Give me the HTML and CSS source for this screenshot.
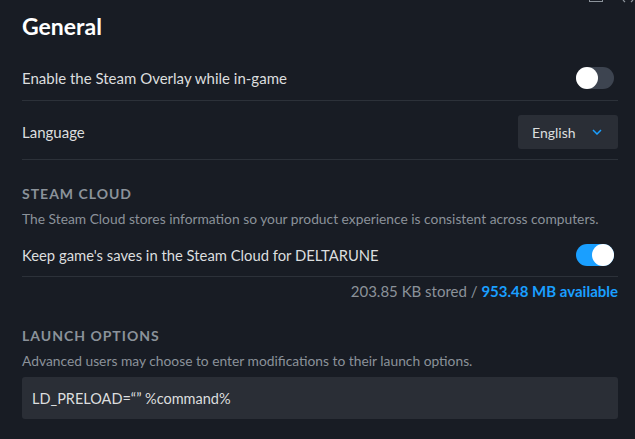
FILE: index.html
```html
<!DOCTYPE html>
<html>
<head>
<meta charset="utf-8">
<link rel="stylesheet" href="styles.css">
</head>
<body>
<div class="winctl">
  <span class="max"></span>
  <span class="close">
    <svg width="12" height="4" viewBox="0 0 12 4"><path d="M1 0 L3 2 M11 0 L9 2" stroke="#8b929a" stroke-width="1.2"/></svg>
  </span>
</div>
<div class="page">
  <h1 class="title">General</h1>
  <div class="row row-toggle">
    <span class="label">Enable the Steam Overlay while in-game</span>
    <span class="toggle"><span class="knob"></span></span>
  </div>
  <div class="divider"></div>
  <div class="row row-lang">
    <span class="label">Language</span>
    <div class="dropdown">
      <span>English</span>
      <svg class="chev" width="10" height="6" viewBox="0 0 10 6"><path d="M1 1 L5 5 L9 1" fill="none" stroke="#1a9fff" stroke-width="1.5"/></svg>
    </div>
  </div>
  <div class="divider"></div>
  <h2 class="section">STEAM CLOUD</h2>
  <p class="desc">The Steam Cloud stores information so your product experience is consistent across computers.</p>
  <div class="row row-cloud">
    <span class="label">Keep game's saves in the Steam Cloud for DELTARUNE</span>
    <span class="toggle on"><span class="knob"></span></span>
  </div>
  <div class="divider"></div>
  <div class="stored">203.85 KB stored / <span class="avail">953.48 MB available</span></div>
  <h2 class="section section-launch">LAUNCH OPTIONS</h2>
  <p class="desc">Advanced users may choose to enter modifications to their launch options.</p>
  <div class="input">LD_PRELOAD=“” %command%</div>
</div>
</body>
</html>
```
FILE: styles.css
```css
html, body {
  margin: 0;
  padding: 0;
  background: #181c24;
  height: 100%;
  overflow: hidden;
}
body {
  font-family: "Lato", "Noto Sans", sans-serif;
  color: #dcdedf;
  position: relative;
}
.winctl {
  position: absolute;
  top: 0;
  right: 0;
  width: 60px;
  height: 4px;
}
.max {
  position: absolute;
  left: 14px;
  top: -12px;
  width: 12px;
  height: 12px;
  border: 1px solid #8b929a;
}
.close {
  position: absolute;
  left: 47px;
  top: 0;
  display: block;
  width: 12px;
  height: 4px;
}
.close svg { display: block; }
.page {
  padding: 0 17px 0 22px;
}
.title {
  margin: 11px 0 15px;
  font-size: 23px;
  line-height: 30px;
  font-weight: 700;
  color: #ffffff;
}
.row {
  display: flex;
  align-items: center;
  justify-content: space-between;
}
.label {
  font-size: 15px;
  line-height: 20px;
  color: #dcdedf;
}
.row-toggle {
  padding: 11px 4px 11px 0;
}
.row-lang {
  padding: 14px 0 10px;
}
.row-cloud {
  padding: 16px 4px 10px 0;
}
.row-cloud .label {
  font-size: 14.8px;
}
.divider {
  height: 1px;
  background: #2c3139;
}
.toggle {
  display: flex;
  width: 38px;
  height: 22px;
  border-radius: 11px;
  background: #3d4450;
  justify-content: flex-start;
}
.toggle.on {
  background: #1a9fff;
  justify-content: flex-end;
}
.knob {
  width: 22px;
  height: 22px;
  border-radius: 50%;
  background: #ffffff;
}
.dropdown {
  display: flex;
  align-items: center;
  justify-content: space-between;
  box-sizing: border-box;
  width: 100px;
  height: 34px;
  padding: 0 16px 0 14px;
  background: #2a2e36;
  border-radius: 3px;
  font-size: 14px;
  color: #dcdedf;
}
.chev { display: block; }
.section {
  margin: 24px 0 0;
  font-size: 14px;
  line-height: 20px;
  font-weight: 700;
  letter-spacing: 1px;
  color: #8b929a;
}
.section-launch {
  margin-top: 25px;
}
.desc {
  margin: 6px 0 0;
  font-size: 13.8px;
  line-height: 18px;
  color: #8b929a;
}
.stored {
  margin-top: 4px;
  text-align: right;
  font-size: 15px;
  line-height: 20px;
  color: #8b929a;
}
.avail {
  color: #1a9fff;
  font-weight: 700;
}
.input {
  margin-top: 7px;
  box-sizing: border-box;
  height: 42px;
  padding: 0 10px;
  display: flex;
  align-items: center;
  background: #2a2e36;
  border-radius: 3px;
  font-size: 14.5px;
  color: #dcdedf;
}
```
